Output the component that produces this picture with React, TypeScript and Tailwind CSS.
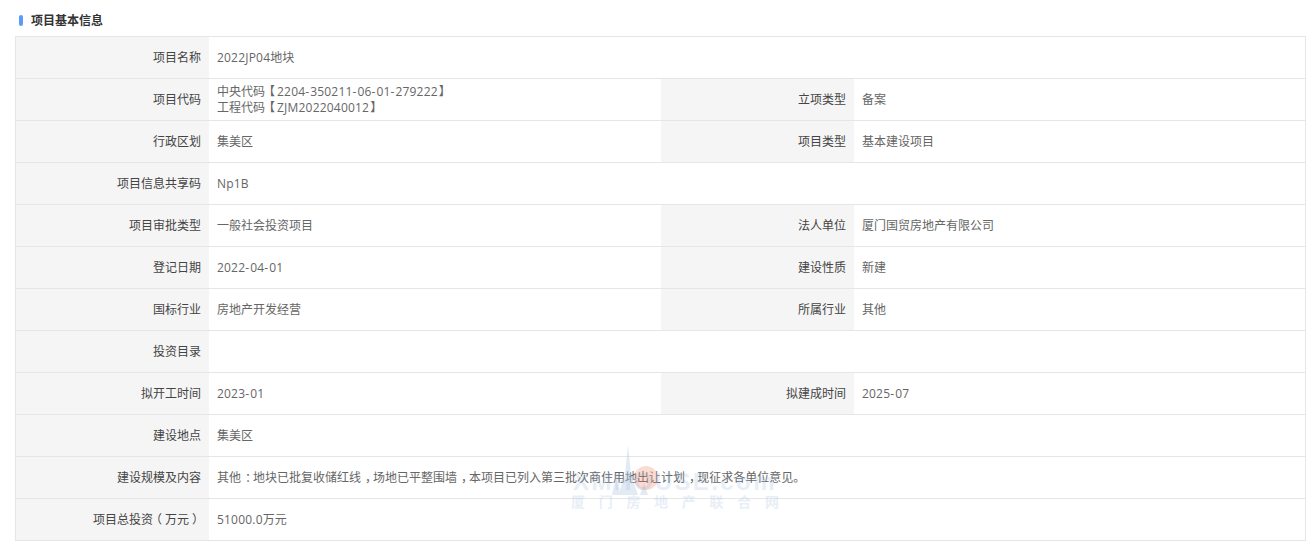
const ROWS: { a: string; b: string | string[]; c?: string; d?: string }[] = [
  { a: '项目名称', b: '2022JP04地块' },
  { a: '项目代码', b: ['中央代码【2204-350211-06-01-279222】', '工程代码【ZJM2022040012】'], c: '立项类型', d: '备案' },
  { a: '行政区划', b: '集美区', c: '项目类型', d: '基本建设项目' },
  { a: '项目信息共享码', b: 'Np1B' },
  { a: '项目审批类型', b: '一般社会投资项目', c: '法人单位', d: '厦门国贸房地产有限公司' },
  { a: '登记日期', b: '2022-04-01', c: '建设性质', d: '新建' },
  { a: '国标行业', b: '房地产开发经营', c: '所属行业', d: '其他' },
  { a: '投资目录', b: '' },
  { a: '拟开工时间', b: '2023-01', c: '拟建成时间', d: '2025-07' },
  { a: '建设地点', b: '集美区' },
  { a: '建设规模及内容', b: '其他：地块已批复收储红线，场地已平整围墙，本项目已列入第三批次商住用地出让计划，现征求各单位意见。' },
  { a: '项目总投资（万元）', b: '51000.0万元' },
]

const labelCls = 'bg-[#f5f5f5] border-y border-[#e6e6e6] pr-[7.5px] text-right font-normal text-[#444] leading-[16px]'
const valueCls = 'border-y border-[#e6e6e6] pl-[8.5px] text-left text-[#666] leading-[16px]'

// 全角标点居中，数字略宽
function Txt({ text }: { text: string }) {
  const parts = text.split(/([，：（）【】]|-|[A-Za-z0-9.]+)/).filter(Boolean)
  return (
    <>
      {parts.map((p, i) => {
        if (/[，：]/.test(p)) return <span key={i} className="ml-[4px] -mr-[4px]">{p}</span>
        if (p === '（') return <span key={i} className="-ml-[3px] mr-[3px]">{p}</span>
        if (p === '）') return <span key={i} className="ml-[3px] -mr-[3px]">{p}</span>
        if (p === '【') return <span key={i} className="-ml-[2px] mr-[2px]">{p}</span>
        if (p === '】') return <span key={i} className="ml-[1px] -mr-[1px]">{p}</span>
        if (p === '-') return <span key={i} className="tracking-[1px]">{p}</span>
        if (/[A-Za-z0-9]/.test(p)) return <span key={i} className="tracking-[0.2px]">{p}</span>
        return <span key={i}>{p}</span>
      })}
    </>
  )
}

// 水印，压在表格上面
function Watermark() {
  return (
    <div className="absolute left-[570px] top-[445px] w-[210px] h-[66px] pointer-events-none">
      <svg viewBox="0 0 60 50" className="absolute left-[28px] top-0 w-[60px] h-[50px] opacity-40">
        <path d="M30 0 L33 30 L40 50 L20 50 L27 30 Z" fill="#b9cbe2" />
        <path d="M14 50 L18 32 L22 50 Z" fill="#b9cbe2" />
        <path d="M42 50 L46 38 L50 50 Z" fill="#b9cbe2" />
      </svg>
      <div className="absolute left-[64px] top-[21px] w-[24px] h-[24px] rounded-full bg-[#f08a70] opacity-30" />
      <span className="absolute left-0 top-[25px] w-full whitespace-nowrap text-center text-[24px] font-bold leading-[24px] tracking-[2.4px] text-[#8fb0d8] opacity-20 font-['Liberation_Sans',sans-serif]">XMHOUSE.com</span>
      <div className="absolute left-0 top-[49px] flex w-full justify-between px-[1px] text-[14px] leading-[16px] font-bold text-[#8fb0d8] opacity-20">
        {['厦', '门', '房', '地', '产', '联', '合', '网'].map((t) => <span key={t}>{t}</span>)}
      </div>
    </div>
  )
}

export default function App() {
  return (
    <div className="relative h-[545px] overflow-hidden bg-white text-xs font-['Open_Sans','Noto_Sans_CJK_SC',sans-serif]">
      <div className="flex h-[36px] items-center pl-[19px] pt-[5px]">
        <span className="h-[11px] w-[4px] rounded-sm bg-[#5b9bf8]" />
        <h2 className="ml-2 text-xs font-bold text-[#333]">项目基本信息</h2>
      </div>
      <div className="pl-[15px] pr-[6px]">
        <table className="w-full table-fixed border-collapse border border-[#e6e6e6]">
          <colgroup>
            <col className="w-[193px]" />
            <col className="w-[452px]" />
            <col className="w-[193px]" />
            <col />
          </colgroup>
          <tbody>
            {ROWS.map((r) => (
              <tr key={r.a} className="h-[42px]">
                <th className={labelCls}><Txt text={r.a} /></th>
                <td className={valueCls} colSpan={r.c ? 1 : 3}>
                  {Array.isArray(r.b) ? r.b.map((l) => <div key={l}><Txt text={l} /></div>) : <Txt text={r.b} />}
                </td>
                {r.c && <th className={labelCls}>{r.c}</th>}
                {r.c && <td className={valueCls}><Txt text={r.d ?? ''} /></td>}
              </tr>
            ))}
          </tbody>
        </table>
      </div>
      <Watermark />
    </div>
  )
}
